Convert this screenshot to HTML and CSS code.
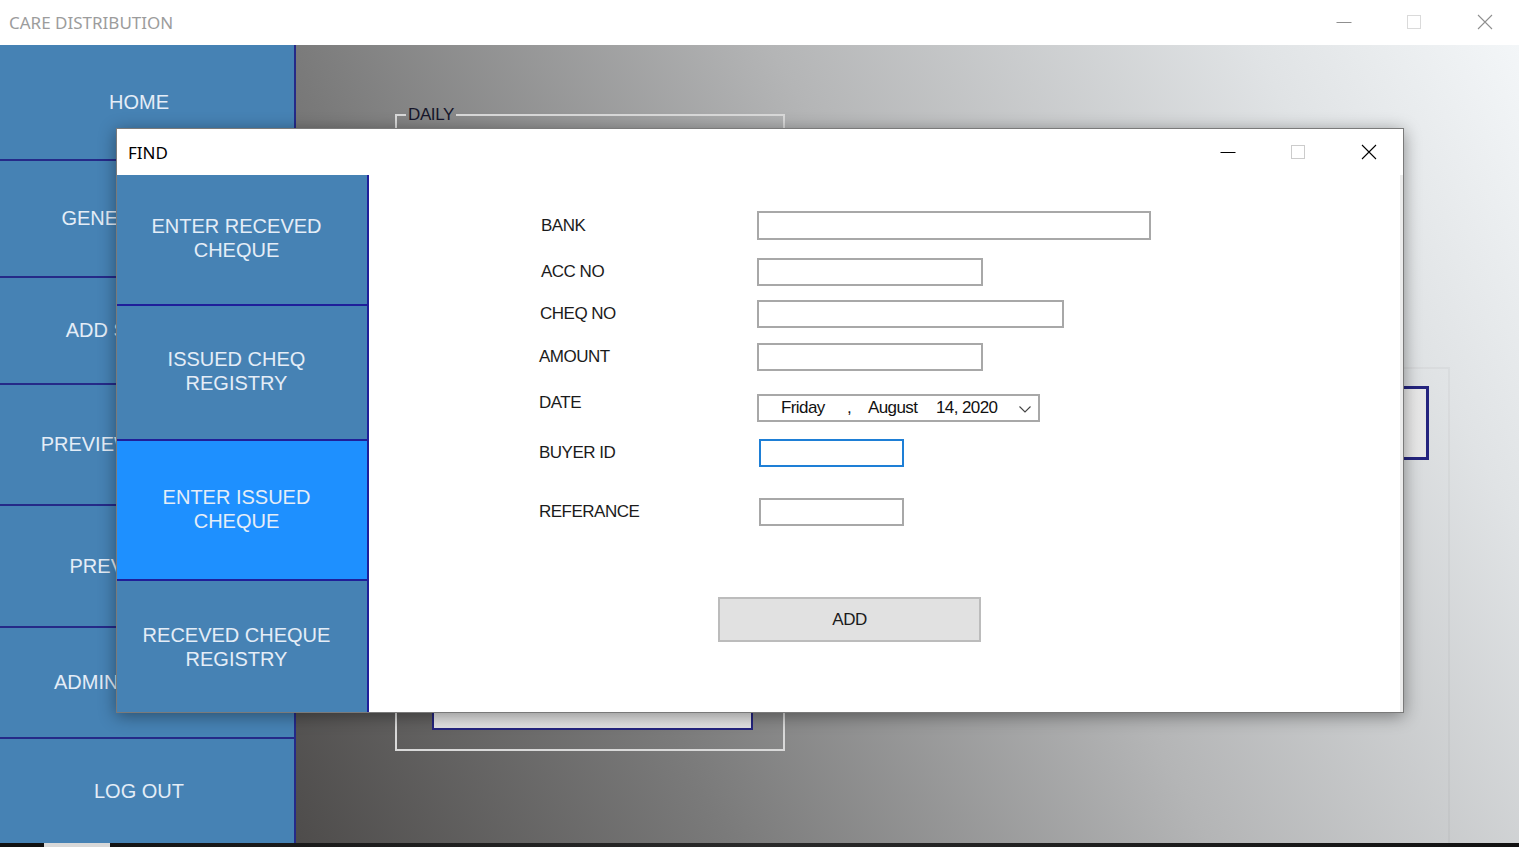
FILE: index.html
```html
<!DOCTYPE html>
<html lang="en">
<head>
<meta charset="utf-8">
<title>CARE DISTRIBUTION</title>
<link rel="stylesheet" href="styles.css">
</head>
<body>
<div class="app">
  <header class="titlebar">
    <span class="app-title">CARE DISTRIBUTION</span>
    <div class="controls">
      <span class="ctl"><svg width="16" height="16" viewBox="0 0 16 16"><path d="M0.5 8.5H15.5" stroke="#8f8f8f" stroke-width="1"/></svg></span>
      <span class="ctl ctl-max"><svg width="16" height="16" viewBox="0 0 16 16"><rect x="1.5" y="1.5" width="13" height="13" fill="none" stroke="#dadada" stroke-width="1"/></svg></span>
      <span class="ctl"><svg width="16" height="16" viewBox="0 0 16 16"><path d="M1 1L15 15M15 1L1 15" stroke="#8f8f8f" stroke-width="1.1"/></svg></span>
    </div>
  </header>

  <div class="workspace">
    <nav class="sidebar">
      <div class="side-item">HOME</div>
      <div class="side-item">GENERATE BILL</div>
      <div class="side-item">ADD SUPPLIER</div>
      <div class="side-item">PREVIEW SUPPLIER</div>
      <div class="side-item">PREVIEW BILL</div>
      <div class="side-item">ADMIN SETTINGS</div>
      <div class="side-item">LOG OUT</div>
    </nav>
    <main class="canvas">
      <fieldset class="group daily">
        <legend>DAILY</legend>
        <div class="group-btn daily-btn"></div>
      </fieldset>
      <fieldset class="group side-group">
        <div class="group-btn side-btn"></div>
      </fieldset>
    </main>
  </div>
  <div class="footer-strip"></div>

  <section class="dialog">
    <div class="dlg-bar">
      <span class="dlg-title">FIND</span>
      <div class="controls">
        <span class="ctl"><svg width="16" height="16" viewBox="0 0 16 16"><path d="M0.5 8.5H15.5" stroke="#000" stroke-width="1"/></svg></span>
        <span class="ctl ctl-max"><svg width="16" height="16" viewBox="0 0 16 16"><rect x="1.5" y="1.5" width="13" height="13" fill="none" stroke="#cccccc" stroke-width="1"/></svg></span>
        <span class="ctl"><svg width="16" height="16" viewBox="0 0 16 16"><path d="M1 1L15 15M15 1L1 15" stroke="#000" stroke-width="1.1"/></svg></span>
      </div>
    </div>
    <div class="dlg-body">
      <div class="dlg-menu">
        <div class="dlg-item">ENTER RECEVED<br>CHEQUE</div>
        <div class="dlg-item">ISSUED CHEQ<br>REGISTRY</div>
        <div class="dlg-item active">ENTER ISSUED<br>CHEQUE</div>
        <div class="dlg-item">RECEVED CHEQUE<br>REGISTRY</div>
      </div>
      <div class="form">
        <div class="field">
          <span class="lbl lbl-in">BANK</span>
          <div class="box box-bank"></div>
        </div>
        <div class="field">
          <span class="lbl lbl-in">ACC NO</span>
          <div class="box box-acc"></div>
        </div>
        <div class="field">
          <span class="lbl lbl-in1">CHEQ NO</span>
          <div class="box box-cheq"></div>
        </div>
        <div class="field">
          <span class="lbl">AMOUNT</span>
          <div class="box box-acc"></div>
        </div>
        <div class="field">
          <span class="lbl lbl-up">DATE</span>
          <div class="box box-date">
            <span class="dp-day">Friday</span>
            <span class="dp-comma">,</span>
            <span class="dp-month">August</span>
            <span class="dp-date">14, 2020</span>
            <svg class="dp-chev" width="12" height="7" viewBox="0 0 12 7"><path d="M0.5 0.5L6 6L11.5 0.5" fill="none" stroke="#444" stroke-width="1.1"/></svg>
          </div>
        </div>
        <div class="field">
          <span class="lbl">BUYER ID</span>
          <div class="box box-small box-focus"></div>
        </div>
        <div class="field">
          <span class="lbl">REFERANCE</span>
          <div class="box box-small"></div>
        </div>
        <div class="field-btn">
          <button class="add-btn" type="button">ADD</button>
        </div>
      </div>
    </div>
  </section>
</div>
</body>
</html>
```

FILE: styles.css
```css
* { box-sizing: border-box; margin: 0; padding: 0; }
html, body { width: 1519px; height: 847px; overflow: hidden; }
body { font-family: "Liberation Sans", Arial, sans-serif; background: #000; }

.app { position: relative; width: 1519px; height: 847px; display: flex; flex-direction: column; }

/* ---------- main title bar ---------- */
.titlebar { flex: none; height: 45px; background: #fff; display: flex; align-items: center; justify-content: space-between; }
.app-title { font-family: "Noto Sans", "Open Sans", sans-serif; font-size: 17px; color: #9c9c9c; padding-left: 9px; padding-bottom: 1px; }
.controls { display: flex; height: 100%; align-items: center; }
.ctl { width: 69px; height: 100%; display: flex; align-items: center; justify-content: center; padding-bottom: 2px; }
.ctl-max { width: 72px; }

/* ---------- workspace ---------- */
.workspace { flex: none; height: 798px; display: flex; }
.sidebar { flex: none; width: 296px; background: #4682b4; border-right: 2px solid #252a88;
  display: grid; grid-template-rows: 116px 117px 107px 121px 122px 111px 1fr; }
.side-item { display: flex; align-items: center; justify-content: center; padding-right: 16px;
  border-bottom: 2px solid #252a88; color: #e4edf7; font-size: 20px; white-space: nowrap; overflow: hidden; }
.side-item:last-child { border-bottom: 0; }

.canvas { flex: 1; display: flex; align-items: flex-start; overflow: hidden;
  background: linear-gradient(61deg, #4e4c4b 0%, #7a7a7a 26%, #b4b5b6 55%, #e0e3e5 84%, #f3f6f8 100%); }

.group { border: 2px solid #d9d9d9; }
.group legend { margin-left: 9px; padding: 0 2px; font-size: 17px; line-height: 20px; letter-spacing: -0.4px; color: #16162a; }
.daily { flex: none; margin: 60px 0 0 99px; width: 390px; height: 646px; display: flex; flex-direction: column; justify-content: flex-end; padding: 0 0 19px 0; }
.group-btn { border: 2px solid #24247e; background: linear-gradient(180deg, #f6f6f6, #e2e2e2); }
.daily-btn { width: 321px; height: 60px; margin-left: 35px; }
.side-group { flex: none; margin: 322px 69px 0 auto; width: 400px; height: 640px; border: 2px solid rgba(0, 0, 0, 0.03); border-left: 0;
  display: flex; justify-content: flex-end; padding: 17px 19px 0 0; align-items: flex-start; }
.side-btn { width: 300px; height: 74px; border-width: 3px; background: linear-gradient(90deg, #dcdcdc, #f0f0f0 80%, #e6e6e6); }

.footer-strip { flex: none; height: 4px;
  background: linear-gradient(90deg, #111 0, #111 44px, #d8d8d8 44px, #d8d8d8 110px, #141414 110px, #2a2a2a 50%, #111 100%); }

/* ---------- dialog ---------- */
.dialog { position: absolute; left: 116px; top: 128px; width: 1288px; height: 585px; background: #fff;
  border: 1px solid #7a7a7a; box-shadow: 0 3px 16px rgba(0, 0, 0, 0.4); display: flex; flex-direction: column; }
.dlg-bar { flex: none; height: 46px; display: flex; align-items: center; justify-content: space-between; }
.dlg-title { font-family: "Noto Sans", "Open Sans", sans-serif; font-size: 17px; color: #000; padding-left: 11px; }
.dlg-bar .ctl { padding-bottom: 0; }
.dlg-body { flex: 1; display: flex; min-height: 0; }

.dlg-menu { flex: none; width: 252px; background: #4682b4; border-right: 2px solid #1f1f9a;
  display: grid; grid-template-rows: 131px 135px 140px 1fr; }
.dlg-item { display: flex; align-items: center; justify-content: center; text-align: center; padding-right: 11px; padding-bottom: 3px;
  border-bottom: 2px solid #1f1f9a; color: #e4edf7; font-size: 20px; line-height: 24px; }
.dlg-item:last-child { border-bottom: 0; padding-bottom: 0; }
.dlg-item.active { background: #1e90ff; }

.form { flex: 1; border-right: 3px solid #ececec; padding: 36px 0 0 170px;
  display: grid; grid-template-rows: 47px 42px 43px 50px 46px 59px 99px auto; align-items: start; }
.field { display: flex; align-items: center; }
.lbl { flex: none; width: 218px; font-size: 17px; letter-spacing: -0.5px; color: #1b1b1b; }
.lbl-in { padding-left: 2px; }
.lbl-in1 { padding-left: 1px; }
.lbl-up { margin-bottom: 10px; }

.box { height: 28px; border: 2px solid #a8a8a8; background: #fff; }
.box-bank { width: 394px; height: 29px; }
.box-acc { width: 226px; }
.box-cheq { width: 307px; }
.box-small { width: 145px; margin-left: 2px; }
.box-focus { border-color: #1e7fd6; }
.box-date { width: 283px; display: flex; align-items: center; padding-left: 22px; padding-right: 7px;
  font-size: 17px; letter-spacing: -0.6px; color: #111; }
.dp-day { width: 66px; }
.dp-comma { width: 21px; }
.dp-month { width: 68px; }
.dp-date { flex: 1; }
.dp-chev { flex: none; margin-top: 2px; }

.field-btn { padding-left: 179px; }
.add-btn { width: 263px; height: 45px; background: #e1e1e1; border: 2px solid #bcbcbc;
  font-family: "Liberation Sans", Arial, sans-serif; font-size: 17px; letter-spacing: -0.5px; color: #1b1b1b; }
```
